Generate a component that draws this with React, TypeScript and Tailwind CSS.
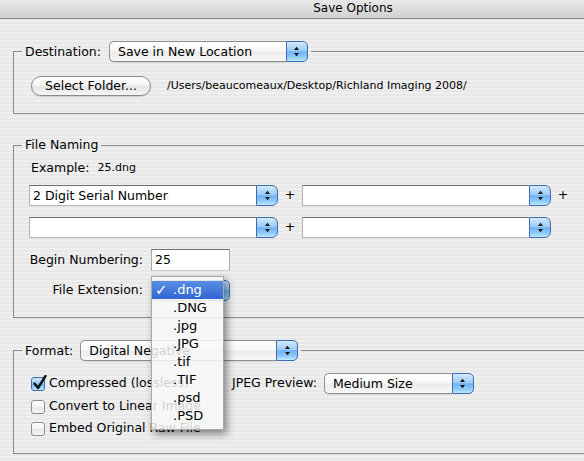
import type { ReactNode } from "react";

// Aqua style blue arrows cap used by popups and combo boxes
function Stepper({ className }: { className: string }) {
  return (
    <span
      className={`flex w-[22px] shrink-0 items-center justify-center border border-[#3d6db3] bg-[linear-gradient(to_bottom,#d3e9fc_0%,#9ccbf5_45%,#6fb2f2_52%,#8fcaf9_80%,#bfeaff_100%)] ${className}`}
    >
      <svg width="7" height="11" viewBox="0 0 7 11">
        <path d="M1 4 L3.5 0.8 L6 4 Z M1 7 L3.5 10.2 L6 7 Z" fill="#151515" />
      </svg>
    </span>
  );
}

function Popup({ label, className }: { label: string; className: string }) {
  return (
    <div className={`flex h-[21px] shrink-0 ${className}`}>
      <span className="flex-1 truncate rounded-l-[5px] border border-r-0 border-[#8e8e8e] bg-[linear-gradient(to_bottom,#ffffff_0%,#f8f8f8_45%,#ececec_55%,#f7f7f7_100%)] pl-[8px] leading-[19px] shadow-[0_1px_0_rgba(0,0,0,0.08)]">
        {label}
      </span>
      <Stepper className="rounded-r-[5px]" />
    </div>
  );
}

function Combo({ value = "" }: { value?: string }) {
  return (
    <div className="flex h-[21px] w-[249px] shrink-0">
      <span className="flex-1 border border-r-0 border-[#b4b4b4] border-t-[#6e6e6e] bg-white pl-[3px] leading-[19px]">
        {value}
      </span>
      <Stepper className="rounded-r-[6px]" />
    </div>
  );
}

function Checkbox({ checked = false }: { checked?: boolean }) {
  return (
    <span
      className={`relative h-[14px] w-[14px] shrink-0 rounded-[3px] border ${
        checked
          ? "border-[#3d6db3] bg-[linear-gradient(to_bottom,#d3e9fc_0%,#9ccbf5_45%,#6fb2f2_55%,#bfeaff_100%)]"
          : "border-[#8e8e8e] bg-[linear-gradient(to_bottom,#ffffff_0%,#f3f3f3_50%,#e6e6e6_55%,#f8f8f8_100%)]"
      }`}
    >
      {checked && (
        <svg className="absolute -top-[3px] left-[1px]" width="14" height="15" viewBox="0 0 14 15">
          <path d="M1.5 8.5 L5 13 L12.5 1" fill="none" stroke="#111" strokeWidth="2.4" strokeLinecap="round" strokeLinejoin="round" />
        </svg>
      )}
    </span>
  );
}

function Group({ legend, children, className }: { legend: ReactNode; children: ReactNode; className: string }) {
  return (
    <fieldset className={`mx-[13px] min-w-0 border border-[#8a8a8a] p-0 ${className}`}>
      <legend className="ml-[8px] flex items-center px-[3px]">{legend}</legend>
      {children}
    </fieldset>
  );
}

const extensions = [".dng", ".DNG", ".jpg", ".JPG", ".tif", ".TIF", ".psd", ".PSD"];

export default function App() {
  return (
    <div className="h-[461px] w-[584px] overflow-hidden [font-family:'DejaVu_Sans',sans-serif] text-[12.5px] text-black">
      <div className="flex h-full w-[706px] flex-col bg-[repeating-linear-gradient(to_bottom,#efefef_0px,#efefef_2px,#e8e8e8_2px,#e8e8e8_4px)]">
        <div className="h-[19px] shrink-0 border-b border-[#8a8a8a] bg-[linear-gradient(to_bottom,#e9e9e9,#d0d0d0)] text-center text-[12px] leading-[17px]">
          Save Options
        </div>

        <Group
          className="mt-[22px]"
          legend={
            <>
              <span className="mr-[8px] leading-[21px]">Destination:</span>
              <Popup label="Save in New Location" className="w-[199px]" />
            </>
          }
        >
          <div className="flex items-center pt-[14px] pb-[17px] pl-[17px]">
            <button className="h-[20px] w-[120px] rounded-full border border-[#8a8a8a] bg-[linear-gradient(to_bottom,#ffffff_0%,#f5f5f5_45%,#e4e4e4_55%,#f7f7f7_100%)] text-[12.5px] leading-[18px] shadow-[0_1px_1px_rgba(0,0,0,0.15)]">
              Select Folder...
            </button>
            <span className="ml-[16px] text-[11px]">/Users/beaucomeaux/Desktop/Richland Imaging 2008/</span>
          </div>
        </Group>

        <Group className="mt-[23px]" legend={<span className="leading-[16px]">File Naming</span>}>
          <div className="flex flex-col pt-[7px] pb-[16px] pl-[15px]">
            <div className="ml-[2px] flex h-[16px] items-center">
              <span>Example:</span>
              <span className="ml-[8px] text-[11px]">25.dng</span>
            </div>
            <div className="mt-[9px] flex items-center">
              <Combo value="2 Digit Serial Number" />
              <span className="w-[24px] text-center">+</span>
              <Combo />
              <span className="w-[24px] text-center">+</span>
            </div>
            <div className="mt-[11px] flex items-center">
              <Combo />
              <span className="w-[24px] text-center">+</span>
              <Combo />
            </div>
            <div className="mt-[11px] flex items-center gap-[8px]">
              <span className="w-[114px] text-right">Begin Numbering:</span>
              <span className="h-[22px] w-[79px] border border-[#a6a6a6] border-t-[#737373] border-b-[#cdcdcd] bg-white pl-[3px] leading-[20px]">
                25
              </span>
            </div>
            <div className="mt-[9px] flex items-center gap-[8px]">
              <span className="w-[114px] text-right">File Extension:</span>
              <div className="relative">
                <Popup label=".dng" className="w-[79px]" />
                {/* open extension menu, slightly see-through like Aqua menus */}
                <div className="absolute -top-[4px] left-0 z-10 w-[73px] border border-[#a9a9a9] bg-[rgba(248,248,248,0.84)] py-[4px] text-[13px] shadow-[3px_4px_8px_rgba(0,0,0,0.45)]">
                  {extensions.map((ext, i) => (
                    <div
                      key={ext}
                      className={`flex h-[18px] items-center leading-[18px] ${
                        i === 0 ? "bg-[linear-gradient(to_bottom,#5a8ee2,#2f66d2)] text-white" : ""
                      }`}
                    >
                      <span className="w-[21px] pl-[3px] text-[15px] font-bold">{i === 0 ? "✓" : ""}</span>
                      <span>{ext}</span>
                    </div>
                  ))}
                </div>
              </div>
            </div>
          </div>
        </Group>

        <Group
          className="mt-[22px]"
          legend={
            <>
              <span className="mr-[7px] leading-[21px]">Format:</span>
              <Popup label="Digital Negative" className="w-[218px]" />
            </>
          }
        >
          <div className="flex flex-col pt-[12px] pb-[14px] pl-[17px]">
            <div className="flex h-[21px] items-center">
              <div className="flex w-[201px] items-center gap-[4px]">
                <Checkbox checked />
                <span>Compressed (lossless)</span>
              </div>
              <span className="mr-[7px]">JPEG Preview:</span>
              <Popup label="Medium Size" className="w-[150px]" />
            </div>
            <div className="mt-[2px] flex h-[21px] items-center gap-[4px]">
              <Checkbox />
              <span>Convert to Linear Image</span>
            </div>
            <div className="mt-[1px] flex h-[21px] items-center gap-[4px]">
              <Checkbox />
              <span>Embed Original Raw File</span>
            </div>
          </div>
        </Group>
      </div>
    </div>
  );
}
